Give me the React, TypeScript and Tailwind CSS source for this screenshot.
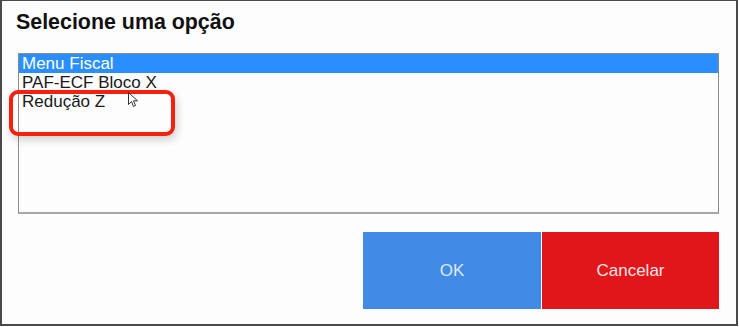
import React from "react";

export default function App() {
  const font = { fontFamily: '"Liberation Sans", Arial, sans-serif' };
  return (
    <div className="w-[739px] h-[327px] bg-white" style={font}>
      <div className="relative w-[738px] h-[326px] bg-[#fdfdfd] border-l-2 border-r-2 border-t border-b-2 border-[#4a4a4a] flex flex-col">
        <div className="pl-[14px] pt-[9px] text-[21.4px] leading-[24px] font-bold text-[#111]">
          Selecione uma opção
        </div>
        <div className="ml-[16px] mt-[19px] w-[701px] h-[161px] border border-[#8c8c8c] border-b-2 border-b-[#a8a8a8] bg-[#fdfdfd] flex flex-col text-[17px] leading-[19px] text-[#1a1a1a]">
          <div className="h-[19px] bg-[#2a8ffd] text-white pl-[3px]">Menu Fiscal</div>
          <div className="h-[19px] pl-[3px]">PAF-ECF Bloco X</div>
          <div className="h-[19px] pl-[3px]">Redução Z</div>
        </div>
        <div className="mt-[18px] flex justify-end pr-[17px] gap-px">
          <button className="w-[178px] h-[77px] bg-[#418be4] text-[#dfe9f8] text-[17px]">OK</button>
          <button className="w-[177px] h-[77px] bg-[#e0161b] text-[#fbe4e4] text-[17px]">Cancelar</button>
        </div>
        <div className="absolute left-[7px] top-[89px] w-[166px] h-[46px] border-[4px] border-[#f5200f] rounded-[9px] shadow-[2px_4px_8px_rgba(0,0,0,0.18)]" />
        <svg className="absolute left-[126px] top-[91px]" width="11" height="16" viewBox="0 0 11 16">
          <path d="M0.5 0.5 L0.5 12.5 L3.5 9.5 L5.5 14.5 L7.5 13.5 L5.5 8.8 L9.5 8.8 Z" fill="white" stroke="#333" strokeWidth="1" strokeLinejoin="round" />
        </svg>
      </div>
    </div>
  );
}
